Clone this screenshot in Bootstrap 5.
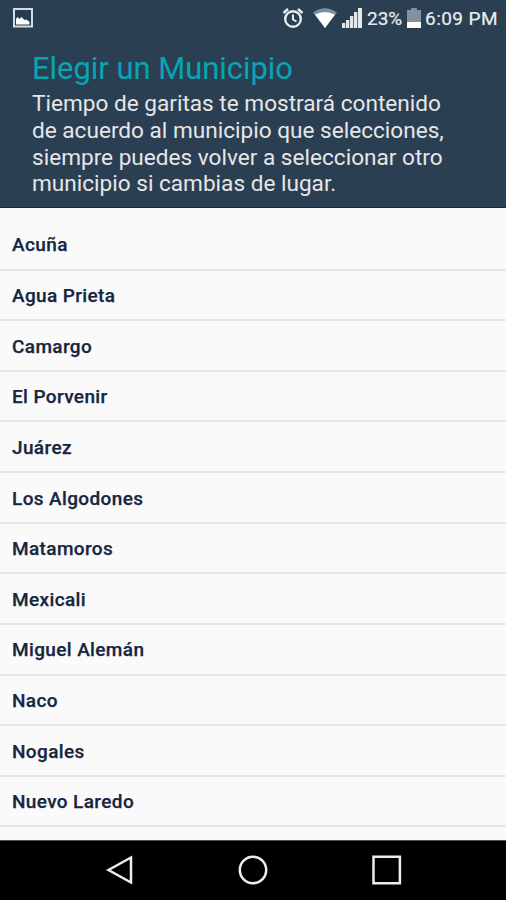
<!DOCTYPE html>
<html lang="es">
<head>
<meta charset="utf-8">
<meta name="viewport" content="width=device-width, initial-scale=1">
<title>Elegir un Municipio</title>
<link href="https://cdn.jsdelivr.net/npm/bootstrap@5.3.0/dist/css/bootstrap.min.css" rel="stylesheet">
<style>
body{font-family:Roboto,"Liberation Sans",sans-serif;background:#fafafa}
.screen{height:900px}
.app-head{background:#2b3f52;height:208px;border-bottom:1px solid #12254a}
.status{height:36px;color:#e9edf0;font-size:19px;line-height:36px;padding:0 8px 0 12px}
.status svg{flex:none}
.wifi{margin-left:9px}
.signal{margin-left:4px}
.percent{width:35px;margin-left:4px;padding-top:1px;-webkit-text-stroke:.2px #e9edf0}
.battery{margin-left:5px}
.clock{width:73px;margin-left:4px;padding-top:1px;letter-spacing:.45px;-webkit-text-stroke:.2px #e9edf0}
.intro{padding:16px 32px 0}
.intro h1{font-size:30.9px;line-height:34px;color:#08a5b5;font-weight:400}
.intro p{font-size:22.6px;line-height:26.8px;color:#e6e6e8;margin-top:5px}
.places{padding-top:11.9px;min-height:0}
.places .list-group-item{flex:none;height:50.63px;padding:3px 12px 0;background:#fafafa;border-color:#e7e7e7;border-width:0 0 2px;color:#17263f;font-size:19px;letter-spacing:.37px;font-weight:500;-webkit-text-stroke:.25px #17263f}
.places .list-group-item:last-child{border-bottom-width:2px}
.keys{height:60px;background:#000;border-top:1px solid #555;padding-bottom:2px}
</style>
<script src="https://cdn.jsdelivr.net/npm/bootstrap@5.3.0/dist/js/bootstrap.bundle.min.js"></script>
</head>
<body>
<div class="screen d-flex flex-column overflow-hidden">
<header class="app-head flex-shrink-0">
<div class="status d-flex align-items-center text-nowrap">
<svg width="22" height="22" viewBox="0 0 22 22"><path d="M2 2h18v17.400H2z" fill="#263a50" stroke="#d5dce1" stroke-width="2"/><path d="M4 17.500v-5.500l1.500-2 2 2 2-2 3 3 2-.5 3 2.500v2.500z" fill="#fff"/></svg>
<svg class="ms-auto" width="22" height="22" viewBox="0 0 22 22" fill="none" stroke="#e9edf0"><circle cx="11" cy="12" r="7.800" stroke-width="2.400"/><path d="M1.500 6 6 2M20.500 6 16 2" stroke-width="2.400"/><path d="M11 7.500v5l3.500 2" stroke-width="2"/></svg>
<svg class="wifi" width="24" height="20" viewBox="0 0 24 20"><path d="M0 4.500Q12-4 24 4.500L12 20z" fill="#7e8d99"/><path d="M2 6.500Q12 1.500 22 6.500L12 20z" fill="#fff"/></svg>
<svg class="signal" width="22" height="20" viewBox="0 0 22 20" fill="#e3e8eb"><path d="M1 15h3.300v5H1zM5 12h3.300v8H5zM9 8h3.300v12H9zM13 4h3.300v16h-3.300zM17 0h4v20h-4z"/></svg>
<span class="percent">23%</span>
<svg class="battery" width="14" height="20" viewBox="0 0 14 20"><path d="M0 2h4V0h6v2h4v18H0z" fill="#83919c"/><path d="M0 14h14v6H0z" fill="#fff"/></svg>
<span class="clock">6:09 PM</span>
</div>
<div class="intro">
<h1 class="mb-0 text-nowrap">Elegir un Municipio</h1>
<p class="mb-0 text-nowrap">Tiempo de garitas te mostrará contenido<br>de acuerdo al municipio que selecciones,<br>siempre puedes volver a seleccionar otro<br>municipio si cambias de lugar.</p>
</div>
</header>
<main class="places flex-grow-1 overflow-hidden">
<ul class="list-group list-group-flush">
<li class="list-group-item d-flex align-items-center">Acuña</li>
<li class="list-group-item d-flex align-items-center">Agua Prieta</li>
<li class="list-group-item d-flex align-items-center">Camargo</li>
<li class="list-group-item d-flex align-items-center">El Porvenir</li>
<li class="list-group-item d-flex align-items-center">Juárez</li>
<li class="list-group-item d-flex align-items-center">Los Algodones</li>
<li class="list-group-item d-flex align-items-center">Matamoros</li>
<li class="list-group-item d-flex align-items-center">Mexicali</li>
<li class="list-group-item d-flex align-items-center">Miguel Alemán</li>
<li class="list-group-item d-flex align-items-center">Naco</li>
<li class="list-group-item d-flex align-items-center">Nogales</li>
<li class="list-group-item d-flex align-items-center">Nuevo Laredo</li>
</ul>
</main>
<nav class="keys d-flex flex-shrink-0 justify-content-center align-items-center">
<svg width="300" height="32" viewBox="0 0 300 32" fill="none" stroke="#eee" stroke-width="2.500"><path d="M28 3.500v25L5.500 16z"/><circle cx="150" cy="16" r="13.200"/><path d="M270.500 2.800h26.400v26.400h-26.400z"/></svg>
</nav>
</div>
</body>
</html>
